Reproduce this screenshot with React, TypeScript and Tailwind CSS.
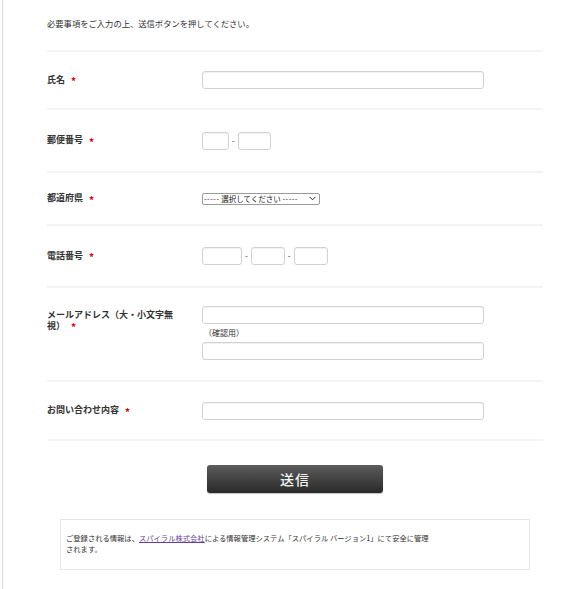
import React from "react";

function Req() {
  return <span className="ml-[6px] text-[10px] font-bold text-[#d7000f] align-middle">*</span>;
}

function Box({ w }: { w: string }) {
  return (
    <input
      type="text"
      className={`${w} h-[18px] rounded-[3px] border border-[#d2d2d2] bg-white shadow-[inset_0_1px_1px_rgba(0,0,0,0.06)] outline-none`}
    />
  );
}

function Dash() {
  return <span className="mx-[3px] text-[8px] leading-none text-[#333]">-</span>;
}

export default function App() {
  return (
    <div className="flex h-[589px] w-[587px] overflow-hidden bg-white font-['Noto_Sans_CJK_JP','Noto_Sans',sans-serif] text-[#333]">
      <div className="ml-[2px] h-full w-[1px] bg-[#dedede]" />
      <div className="ml-[44px] flex w-[496px] flex-col">
        <div className="h-[50px] pt-[17px] text-[8.3px] leading-[12px]">
          必要事項をご入力の上、送信ボタンを押してください。
        </div>

        <div className="flex h-[58px] items-center border-t-2 border-[#f3f3f3]">
          <div className="w-[155px] text-[9px] font-bold leading-[11px]">
            氏名<Req />
          </div>
          <Box w="w-[282px]" />
        </div>

        <div className="flex h-[63px] items-center border-t-2 border-[#f3f3f3]">
          <div className="w-[155px] text-[9px] font-bold leading-[11px]">
            郵便番号<Req />
          </div>
          <div className="flex items-center">
            <Box w="w-[27px]" />
            <Dash />
            <Box w="w-[33px]" />
          </div>
        </div>

        <div className="flex h-[53px] items-center border-t-2 border-[#f3f3f3]">
          <div className="w-[155px] text-[9px] font-bold leading-[11px]">
            都道府県<Req />
          </div>
          <div className="flex h-[12px] w-[118px] items-center justify-between rounded-[2px] border border-[#9a9a9a] bg-white pl-[1px] pr-[3px]">
            <span className="whitespace-nowrap text-[7.5px] leading-none text-[#222]">
              <span className="tracking-[0.5px]">-----</span> 選択してください <span className="tracking-[0.5px]">-----</span>
            </span>
            <svg width="7" height="5" viewBox="0 0 7 5" fill="none">
              <path d="M0.5 0.8 L3.5 3.8 L6.5 0.8" stroke="#333" strokeWidth="1" />
            </svg>
          </div>
        </div>

        <div className="flex h-[62px] items-center border-t-2 border-[#f3f3f3]">
          <div className="w-[155px] text-[9px] font-bold leading-[11px]">
            電話番号<Req />
          </div>
          <div className="flex items-center">
            <Box w="w-[40px]" />
            <Dash />
            <Box w="w-[34px]" />
            <Dash />
            <Box w="w-[34px]" />
          </div>
        </div>

        <div className="flex h-[94px] items-start border-t-2 border-[#f3f3f3]">
          <div className="w-[155px] pt-[21px]">
            <div className="w-[132px] text-[9px] font-bold leading-[11px]">
              メールアドレス（大・小文字無視）<Req />
            </div>
          </div>
          <div className="flex flex-col pt-[18px]">
            <Box w="w-[282px]" />
            <div className="h-[18px] pl-[2px] text-[8px] leading-[18px]">（確認用）</div>
            <Box w="w-[282px]" />
          </div>
        </div>

        <div className="flex h-[61px] items-center border-t-2 border-b-2 border-[#f3f3f3]">
          <div className="w-[155px] text-[9px] font-bold leading-[11px]">
            お問い合わせ内容<Req />
          </div>
          <Box w="w-[282px]" />
        </div>

        <div className="mt-[24px] flex justify-center">
          <button className="h-[28px] w-[176px] rounded-[3px] bg-gradient-to-b from-[#5c5c5c] to-[#2a2a2a] text-[14px] font-medium leading-[28px] tracking-[1px] text-[#f2f2f2] shadow-[0_1px_1px_rgba(0,0,0,0.25)]">
            送信
          </button>
        </div>

        <div className="mt-[26px] ml-[13px] h-[51px] w-[470px] border border-[#e6e6e6] bg-white pl-[5px] pt-[13px]">
          <div className="w-[367px] text-[7.3px] leading-[11px] text-[#333]">
            ご登録される情報は、<span className="text-[#6b3fa0] underline">スパイラル株式会社</span>による情報管理システム「スパイラル バージョン1」にて安全に管理されます。
          </div>
        </div>
      </div>
    </div>
  );
}
